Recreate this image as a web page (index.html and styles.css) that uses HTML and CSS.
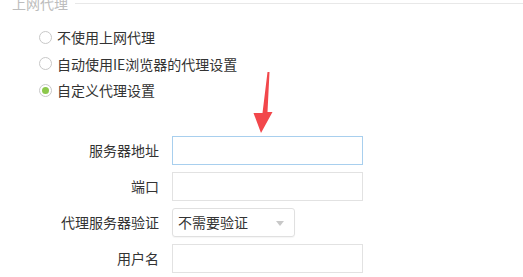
FILE: index.html
```html
<!DOCTYPE html>
<html>
<head>
<meta charset="utf-8">
<link rel="stylesheet" href="styles.css">
</head>
<body>
<div class="page">
  <div class="legend-row">
    <span class="legend">上网代理</span>
    <span class="rule"></span>
  </div>
  <div class="radios">
    <div class="radio-row"><span class="radio"></span><span class="radio-text">不使用上网代理</span></div>
    <div class="radio-row"><span class="radio"></span><span class="radio-text">自动使用IE浏览器的代理设置</span></div>
    <div class="radio-row"><span class="radio checked"></span><span class="radio-text">自定义代理设置</span></div>
  </div>
  <div class="form">
    <div class="label">服务器地址</div>
    <div class="input focus"></div>
    <div class="label">端口</div>
    <div class="input"></div>
    <div class="label">代理服务器验证</div>
    <div class="select-col"><div class="select"><span class="select-text">不需要验证</span><span class="caret"></span></div></div>
    <div class="label">用户名</div>
    <div class="input"></div>
  </div>
  <svg class="arrow" width="30" height="70" viewBox="0 0 30 70">
    <path d="M17.5 0 L19.5 0 L17.5 40 L22.5 40 L11 61 L3.5 41 L12.5 41 Z" fill="#f2474b"/>
  </svg>
</div>
</body>
</html>
```
FILE: styles.css
```css
html, body {
  margin: 0;
  padding: 0;
  background: #ffffff;
}
.page {
  position: relative;
  width: 523px;
  height: 277px;
  overflow: hidden;
  font-family: "Noto Sans CJK SC", "Noto Sans", sans-serif;
  font-size: 14px;
  color: #333333;
}
.legend-row {
  display: flex;
  align-items: center;
  height: 14px;
  margin-top: -4px;
  padding-left: 12px;
}
.legend {
  color: #bdbdbd;
  font-size: 14px;
  line-height: 14px;
}
.rule {
  flex: 1;
  height: 1px;
  background: #e8e8e8;
  margin-left: 7px;
}
.radios {
  margin-top: 14px;
  padding-left: 39px;
}
.radio-row {
  display: flex;
  align-items: center;
  height: 26.5px;
}
.radio {
  box-sizing: border-box;
  width: 13px;
  height: 13px;
  border: 1px solid #c8c8c8;
  border-radius: 50%;
  margin-right: 5px;
  background: #fff;
  display: flex;
  align-items: center;
  justify-content: center;
}
.radio.checked::after {
  content: "";
  width: 7px;
  height: 7px;
  border-radius: 50%;
  background: #8cc84b;
}
.radio-text {
  line-height: 20px;
  color: #333;
}
.form {
  display: grid;
  grid-template-columns: 160px 191px;
  grid-auto-rows: 29px;
  column-gap: 12px;
  row-gap: 7px;
  margin-top: 32px;
}
.label {
  text-align: right;
  line-height: 29px;
  color: #333;
  padding-right: 1px;
}
.input {
  box-sizing: border-box;
  border: 1px solid #e2e2e2;
  background: #fff;
}
.input.focus {
  border-color: #a8cfee;
}
.select-col {
  display: flex;
}
.select {
  box-sizing: border-box;
  width: 123px;
  height: 29px;
  border: 1px solid #e0e0e0;
  border-radius: 3px;
  display: flex;
  align-items: center;
  justify-content: space-between;
  padding: 0 10px 0 5px;
  box-shadow: 0 1px 1px rgba(0,0,0,0.04);
}
.select-text {
  color: #333;
}
.caret {
  width: 0;
  height: 0;
  border-left: 4px solid transparent;
  border-right: 4px solid transparent;
  border-top: 5px solid #c8c8c8;
  margin-top: 2px;
}
.arrow {
  position: absolute;
  left: 250px;
  top: 72px;
}
```
